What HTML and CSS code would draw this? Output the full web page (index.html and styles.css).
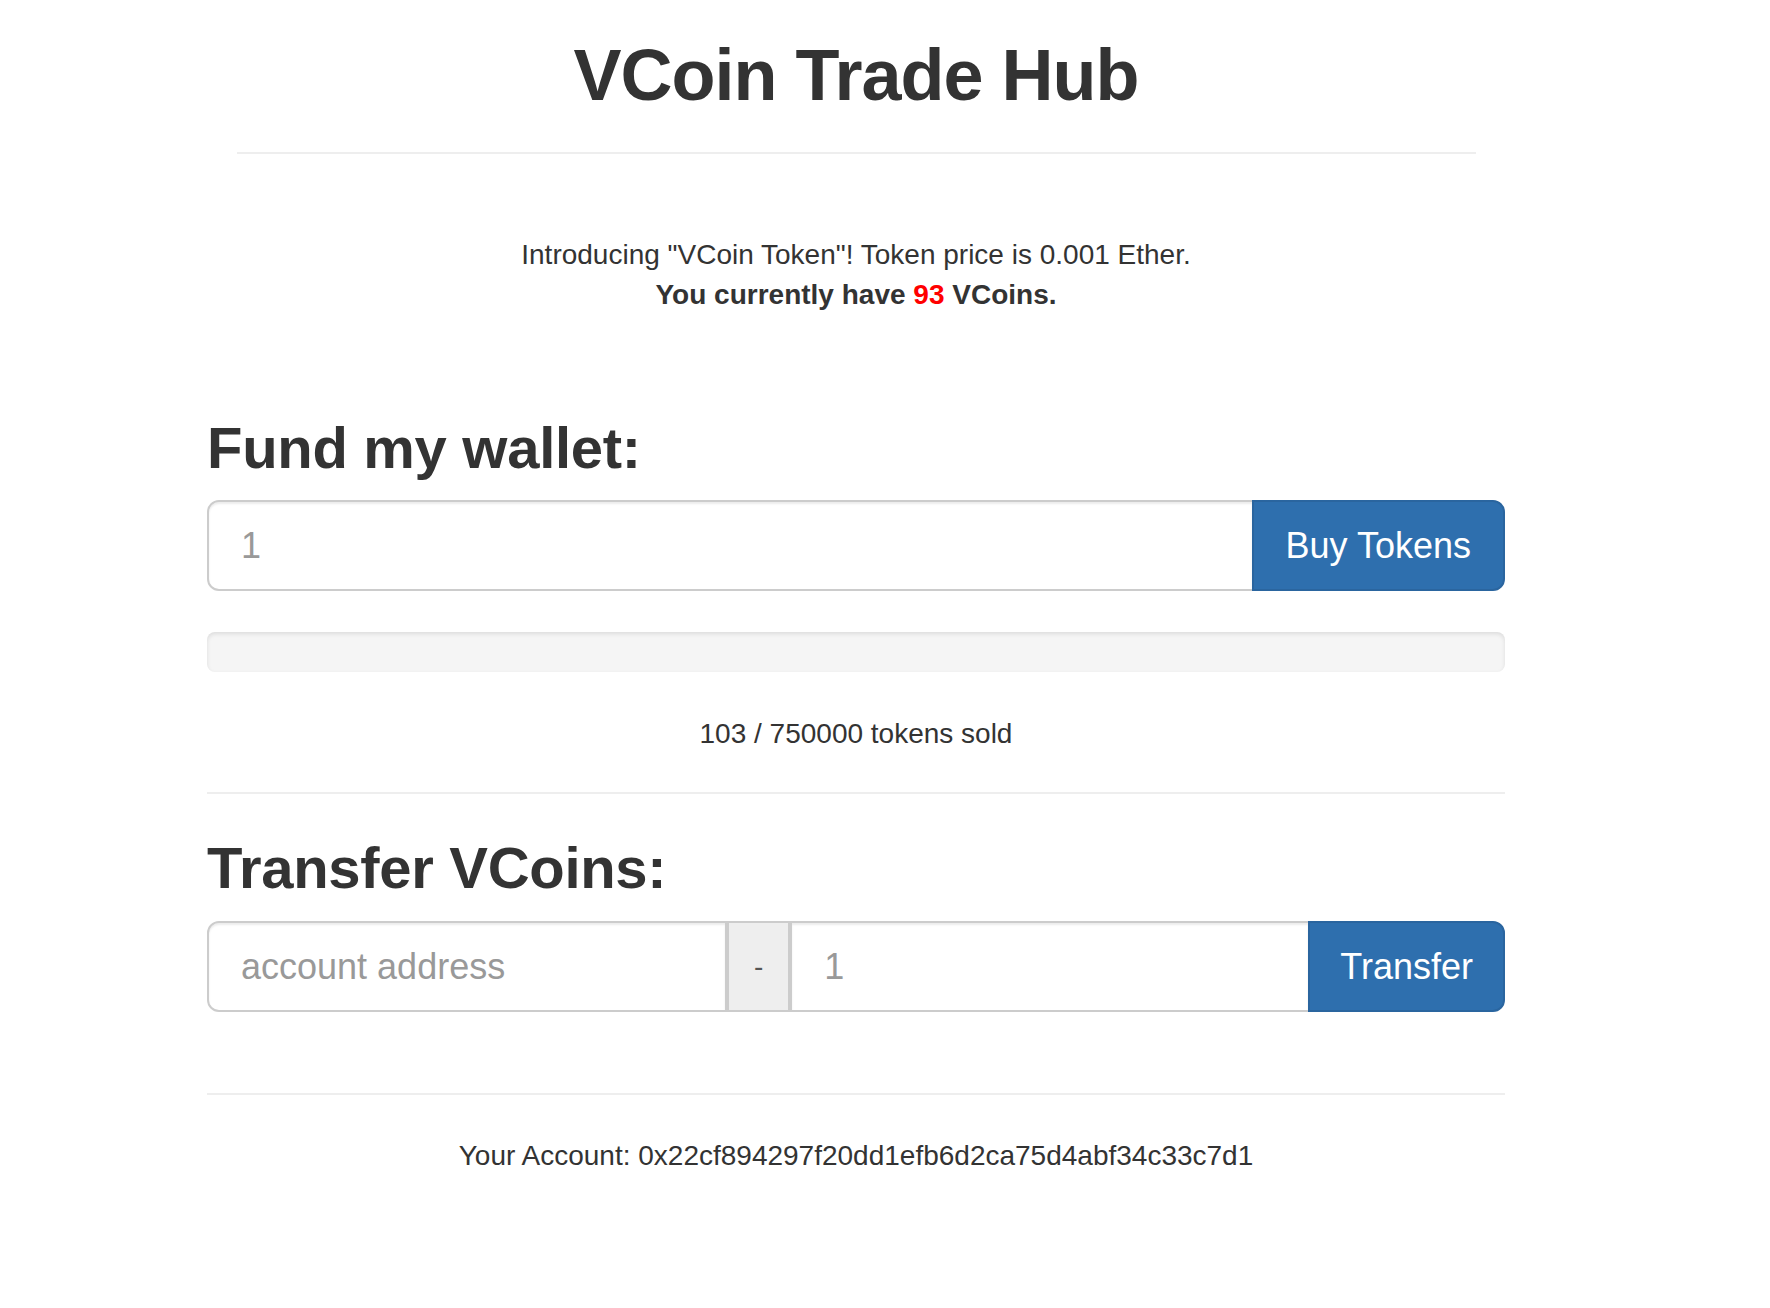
FILE: index.html
```html
<!DOCTYPE html>
<html lang="en">
<head>
<meta charset="utf-8">
<title>VCoin Trade Hub</title>
<link rel="stylesheet" href="styles.css">
</head>
<body>
<div class="page">
  <main class="container">
    <header class="header">
      <h1 class="title">VCoin Trade Hub</h1>
      <hr class="header-rule">
    </header>

    <section class="intro">
      <p class="intro-line">Introducing "VCoin Token"! Token price is 0.001 Ether.</p>
      <p class="intro-line balance">You currently have <span class="count">93</span> VCoins.</p>
    </section>

    <section class="fund">
      <h2 class="section-title">Fund my wallet:</h2>
      <form class="input-group">
        <input class="field" type="number" placeholder="1">
        <button class="btn" type="button">Buy Tokens</button>
      </form>
      <div class="progress"><div class="progress-bar" style="width:0%"></div></div>
      <p class="sold">103 / 750000 tokens sold</p>
    </section>

    <hr class="divider">

    <section class="transfer">
      <h2 class="section-title">Transfer VCoins:</h2>
      <form class="input-group">
        <input class="field" type="text" placeholder="account address">
        <span class="addon">-</span>
        <input class="field" type="number" placeholder="1">
        <button class="btn btn-transfer" type="button">Transfer</button>
      </form>
    </section>

    <hr class="divider footer-rule">

    <p class="account">Your Account: 0x22cf894297f20dd1efb6d2ca75d4abf34c33c7d1</p>
  </main>
</div>
</body>
</html>
```

FILE: styles.css
```css
* {
  box-sizing: border-box;
}

html, body {
  margin: 0;
  padding: 0;
  background: #fff;
}

body {
  font-family: "Liberation Sans", Arial, Helvetica, sans-serif;
  font-size: 28px;
  line-height: 40px;
  color: #333;
}

.page {
  width: 1712px;
}

.container {
  width: 1298px;
  margin: 0 auto;
}

.header {
  width: 1239px;
  margin: 0 auto;
  text-align: center;
}

.title {
  margin: 35px 0 0;
  font-size: 72px;
  line-height: 80px;
  font-weight: bold;
  letter-spacing: -1px;
  color: #333;
}

.header-rule {
  margin: 37px 0 0;
  border: 0;
  border-top: 2px solid #eee;
  height: 0;
}

.intro {
  margin-top: 81px;
  text-align: center;
}

.intro-line {
  margin: 0;
}

.balance {
  font-weight: bold;
}

.count {
  color: #f00;
}

.section-title {
  margin: 0;
  font-size: 58px;
  line-height: 64px;
  font-weight: bold;
  letter-spacing: -0.3px;
  color: #333;
}

.fund {
  margin-top: 101px;
}

.input-group {
  display: flex;
  height: 91px;
  margin: 20px 0 0;
}

.field {
  flex: 1 1 0;
  min-width: 0;
  height: 91px;
  padding: 0 32px;
  font-family: "Liberation Sans", Arial, Helvetica, sans-serif;
  font-size: 36px;
  color: #555;
  background: #fff;
  border: 2px solid #ccc;
  border-radius: 0;
  box-shadow: inset 0 2px 2px rgba(0, 0, 0, 0.075);
  outline: none;
  -moz-appearance: textfield;
}

.field::-webkit-outer-spin-button,
.field::-webkit-inner-spin-button {
  -webkit-appearance: none;
  margin: 0;
}

.field::placeholder {
  color: #999;
}

.field:first-child {
  border-radius: 12px 0 0 12px;
}

.addon {
  display: flex;
  align-items: center;
  justify-content: center;
  padding: 0 25px;
  font-size: 28px;
  color: #555;
  background: #eee;
  border: 2px solid #ccc;
}

.btn {
  flex: 0 0 auto;
  height: 91px;
  padding: 0 32px;
  font-family: "Liberation Sans", Arial, Helvetica, sans-serif;
  font-size: 36px;
  color: #fff;
  background: #2e6fae;
  border: 2px solid #2a659f;
  border-radius: 0 12px 12px 0;
  margin-left: -2px;
  cursor: pointer;
}

.btn-transfer {
  padding: 0 30px;
}

.progress {
  height: 40px;
  margin-top: 41px;
  background: #f5f5f5;
  border-radius: 8px;
  overflow: hidden;
  box-shadow: inset 0 2px 4px rgba(0, 0, 0, 0.1);
}

.progress-bar {
  height: 100%;
  background: #337ab7;
}

.sold {
  margin: 42px 0 0;
  text-align: center;
}

.divider {
  margin: 38px 0 0;
  border: 0;
  border-top: 2px solid #eee;
  height: 0;
}

.transfer {
  margin-top: 42px;
}

.transfer .input-group {
  margin-top: 21px;
}

.footer-rule {
  margin-top: 81px;
}

.account {
  margin: 41px 0 0;
  text-align: center;
}
```
